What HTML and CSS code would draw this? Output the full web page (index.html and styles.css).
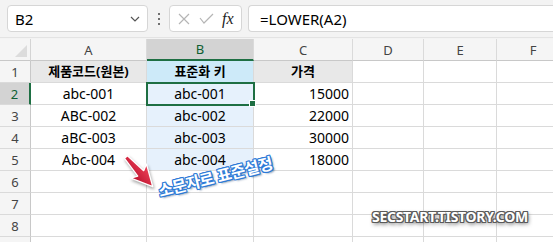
FILE: index.html
```html
<!DOCTYPE html>
<html lang="ko">
<head>
    <meta charset="UTF-8">
    <title>LOWER 표준화 키</title>
    <link rel="stylesheet" href="styles.css">
</head>
<body>

    <!-- Formula bar -->
    <div class="toolbar">
        <div class="name-box">
            <span>B2</span>
            <svg class="chevron" width="10" height="6" viewBox="0 0 10 6"><polyline points="1,1 5,5 9,1" fill="none" stroke="#555" stroke-width="1.2"/></svg>
        </div>
        <div class="dots"><i></i><i></i><i></i></div>
        <div class="fx-box">
            <svg width="12" height="12" viewBox="0 0 12 12"><path d="M1 1 L11 11 M11 1 L1 11" stroke="#b5b5b5" stroke-width="1.2"/></svg>
            <svg width="15" height="11" viewBox="0 0 15 11"><polyline points="1,5 5,10 14,1" fill="none" stroke="#b5b5b5" stroke-width="1.2"/></svg>
            <span class="fx">fx</span>
        </div>
        <div class="formula">=LOWER(A2)</div>
    </div>

    <!-- Sheet -->
    <div class="sheet">
        <div class="grid">
            <div class="corner"><span class="tri"></span></div>
            <div class="col-head">A</div>
            <div class="col-head active">B</div>
            <div class="col-head">C</div>
            <div class="col-head">D</div>
            <div class="col-head">E</div>
            <div class="col-head">F</div>

            <div class="row-head">1</div>
            <div class="cell head">제품코드(원본)</div>
            <div class="cell head key">표준화 키</div>
            <div class="cell head">가격</div>
            <div class="cell"></div><div class="cell"></div><div class="cell"></div>

            <div class="row-head active">2</div>
            <div class="cell center">abc-001</div>
            <div class="cell center fill selected">abc-001</div>
            <div class="cell num">15000</div>
            <div class="cell"></div><div class="cell"></div><div class="cell"></div>

            <div class="row-head">3</div>
            <div class="cell center">ABC-002</div>
            <div class="cell center fill">abc-002</div>
            <div class="cell num">22000</div>
            <div class="cell"></div><div class="cell"></div><div class="cell"></div>

            <div class="row-head">4</div>
            <div class="cell center">aBC-003</div>
            <div class="cell center fill">abc-003</div>
            <div class="cell num">30000</div>
            <div class="cell"></div><div class="cell"></div><div class="cell"></div>

            <div class="row-head">5</div>
            <div class="cell center">Abc-004</div>
            <div class="cell center fill">abc-004</div>
            <div class="cell num">18000</div>
            <div class="cell"></div><div class="cell"></div><div class="cell"></div>

            <div class="row-head">6</div>
            <div class="cell"></div><div class="cell"></div><div class="cell"></div>
            <div class="cell"></div><div class="cell"></div><div class="cell"></div>

            <div class="row-head">7</div>
            <div class="cell"></div><div class="cell"></div><div class="cell"></div>
            <div class="cell"></div><div class="cell"></div><div class="cell"></div>

            <div class="row-head">8</div>
            <div class="cell"></div><div class="cell"></div><div class="cell"></div>
            <div class="cell"></div><div class="cell"></div><div class="cell"></div>

            <div class="row-head"></div>
            <div class="cell"></div><div class="cell"></div><div class="cell"></div>
            <div class="cell"></div><div class="cell"></div><div class="cell"></div>
        </div>

        <!-- Annotation -->
        <svg class="arrow" width="48" height="48" viewBox="0 0 48 48">
            <defs>
                <linearGradient id="red" x1="0" y1="0" x2="0" y2="1">
                    <stop offset="0" stop-color="#f0445a"/>
                    <stop offset="1" stop-color="#b80f2c"/>
                </linearGradient>
            </defs>
            <g transform="translate(5,5) rotate(48)">
                <polygon points="0,-2 22,-4 19,-10.5 40,0 19,10.5 22,4 0,2" fill="url(#red)" stroke="#fff" stroke-width="1.3" stroke-linejoin="round"/>
            </g>
        </svg>
        <div class="note">소문자로 표준설정</div>
        <div class="watermark">SECSTART.TISTORY.COM</div>
    </div>

</body>
</html>
```

FILE: styles.css
```css
body {
    margin: 0;
    width: 553px;
    height: 242px;
    overflow: hidden;
    background: #fff;
    font-family: 'Noto Sans', 'Noto Sans CJK KR', sans-serif;
    color: #000;
}

/* Formula bar */
.toolbar {
    display: flex;
    align-items: center;
    height: 38px;
    padding: 0 0 0 7px;
    box-sizing: border-box;
    background: #f3f3f3;
    border-bottom: 1px solid #e3e3e3;
}

.name-box,
.fx-box,
.formula {
    height: 27px;
    box-sizing: border-box;
    background: #fff;
    border: 1px solid #d6d6d6;
    border-radius: 4px;
    display: flex;
    align-items: center;
}

.name-box {
    width: 141px;
    padding: 0 7px 0 7px;
    justify-content: space-between;
    font-size: 15px;
}

.dots {
    width: 21px;
    display: flex;
    flex-direction: column;
    align-items: center;
    gap: 3px;
}

.dots i {
    width: 2px;
    height: 2px;
    background: #444;
    border-radius: 1px;
}

.fx-box {
    width: 73px;
    padding: 0 0 0 8px;
    gap: 9px;
}

.fx-box .fx {
    font-family: 'Liberation Serif', serif;
    font-style: italic;
    font-size: 16px;
    color: #222;
    margin-left: -1px;
}

.formula {
    flex: 1;
    margin-left: 6px;
    padding-left: 11px;
    border-right: none;
    border-radius: 4px 0 0 4px;
    font-size: 15px;
}

/* Sheet */
.sheet {
    position: relative;
    overflow: hidden;
    height: 204px;
    border-top: 1px solid #f3f3f3;
}

.grid {
    display: grid;
    grid-template-columns: 31px 116px 107px 99px 71px 73px 73px;
    grid-auto-rows: 22px;
    grid-template-rows: 22px;
}

.corner,
.col-head,
.row-head {
    background: #f5f5f5;
    color: #444;
    font-size: 13px;
    display: flex;
    align-items: center;
    justify-content: center;
    box-sizing: border-box;
}

.corner {
    position: relative;
    border-right: 1px solid #d4d4d4;
    border-bottom: 1px solid #c8c8c8;
}

.corner .tri {
    position: absolute;
    right: 3px;
    bottom: 3px;
    width: 0;
    height: 0;
    border-left: 12px solid transparent;
    border-bottom: 12px solid #dcdcdc;
}

.col-head {
    border-right: 1px solid #dadada;
    border-bottom: 1px solid #c8c8c8;
}

.col-head.active {
    background: #d3d3d3;
    color: #0f5f32;
    border-bottom: 2px solid #1e6f43;
}

.row-head {
    border-right: 1px solid #c8c8c8;
    border-bottom: 1px solid #dadada;
}

.row-head.active {
    background: #d3d3d3;
    color: #0f5f32;
    border-right: 2px solid #1e6f43;
}

.cell {
    border-right: 1px solid #dadada;
    border-bottom: 1px solid #dadada;
    box-sizing: border-box;
    font-size: 14px;
    line-height: 21px;
    white-space: nowrap;
}

.cell.head {
    background: #e8e8e8;
    font-weight: bold;
    font-size: 13px;
    text-align: center;
}

.cell.head.key {
    background: #cdeaf9;
}

.cell.center {
    text-align: center;
}

.cell.num {
    text-align: right;
    padding-right: 3px;
}

.cell.fill {
    background: #e6f1fc;
}

.cell.selected {
    position: relative;
    outline: 2px solid #1e6f43;
    outline-offset: -1px;
}

.cell.selected::after {
    content: '';
    position: absolute;
    right: -3px;
    bottom: -3px;
    width: 5px;
    height: 5px;
    background: #1e6f43;
    border: 1px solid #fff;
}

/* Annotation */
.arrow {
    position: absolute;
    left: 121px;
    top: 113px;
    filter: drop-shadow(1px 2px 1.5px rgba(0, 0, 0, 0.35));
}

.note {
    position: absolute;
    left: 215px;
    top: 137px;
    transform: translate(-50%, -50%) rotate(-14deg);
    white-space: nowrap;
    font-family: 'Noto Sans CJK KR', sans-serif;
    font-weight: bold;
    font-size: 16px;
    letter-spacing: -0.6px;
    color: #fff;
    text-shadow:
        1px 0 #2c7ad8, -1px 0 #2c7ad8, 0 1px #2c7ad8, 0 -1px #2c7ad8,
        1px 1px #2c7ad8, -1px -1px #2c7ad8, 1px -1px #2c7ad8, -1px 1px #2c7ad8,
        2px 2px 2px rgba(10, 50, 110, 0.55);
}

.watermark {
    position: absolute;
    left: 372px;
    top: 168px;
    font-family: 'Noto Sans', sans-serif;
    font-weight: bold;
    font-size: 14px;
    letter-spacing: -0.3px;
    color: #fff;
    text-shadow:
        1px 0 #5a5a5a, -1px 0 #5a5a5a, 0 1px #5a5a5a, 0 -1px #5a5a5a,
        1px 1px #5a5a5a, -1px -1px #5a5a5a, 1px -1px #5a5a5a, -1px 1px #5a5a5a,
        1px 2px 4px rgba(0, 0, 0, 0.7);
}
```
